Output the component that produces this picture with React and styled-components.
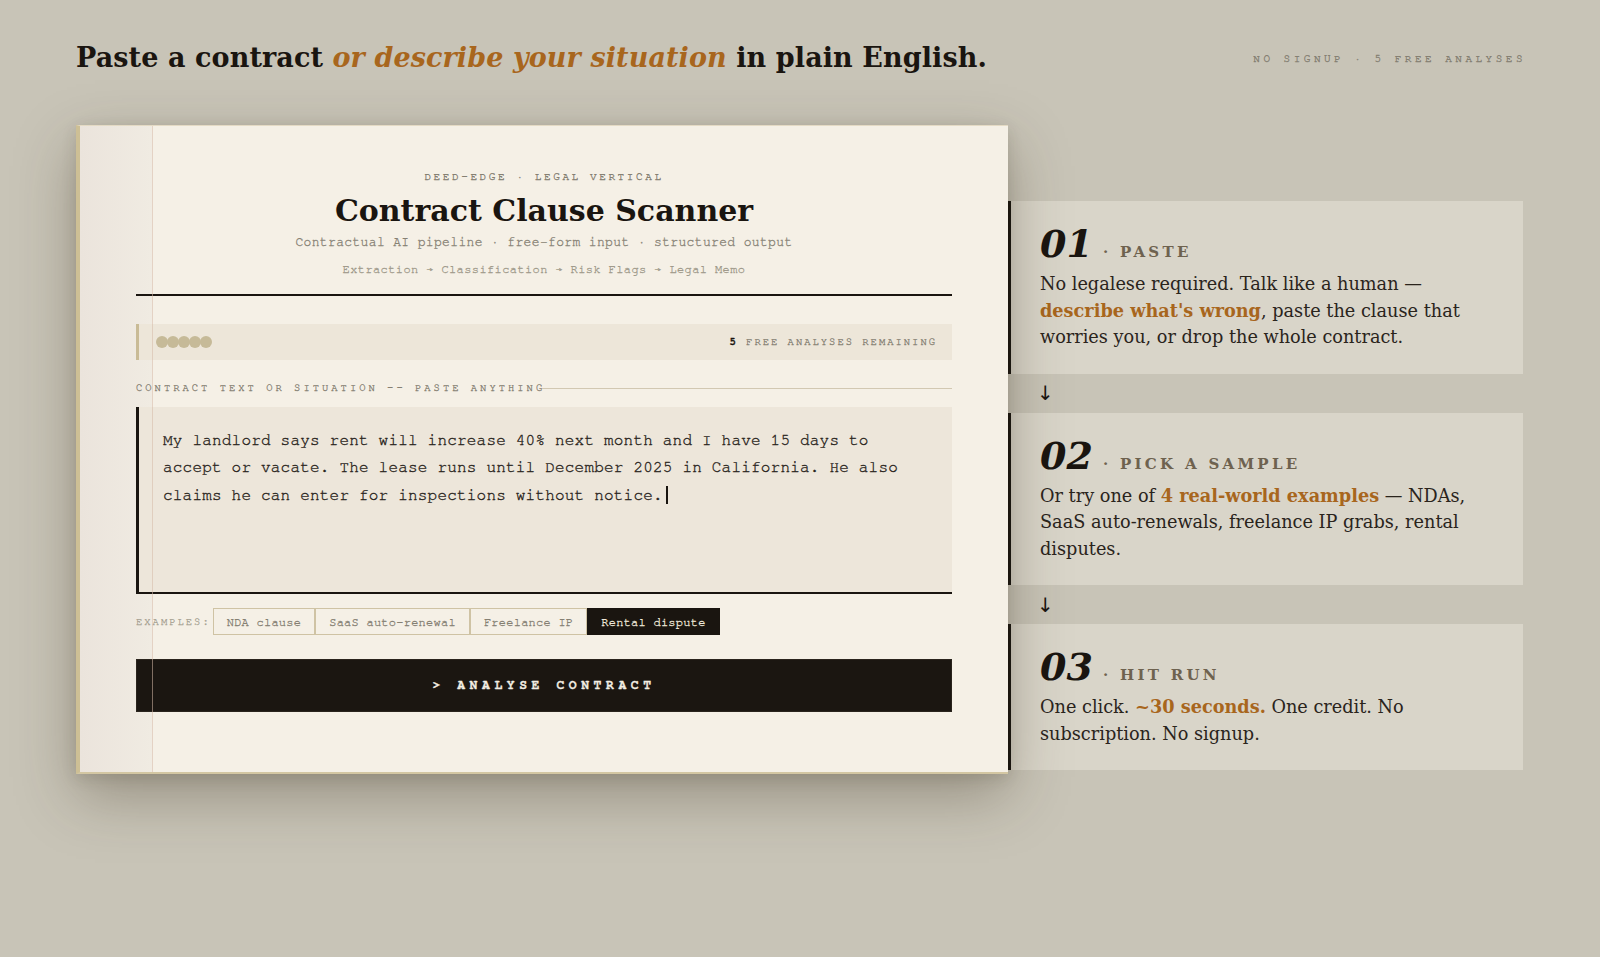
import React from "react";
import styled, { createGlobalStyle, css } from "styled-components";

const Global = createGlobalStyle`
  html, body { margin: 0; padding: 0; }
  body {
    background: #c8c4b7;
    font-family: "DejaVu Serif", serif;
    color: #1a1510;
    -webkit-font-smoothing: antialiased;
  }
  #root { min-height: 957px; }
`;

const MONO = `"Nimbus Mono PS", "FreeMono", "Courier", "Liberation Mono", "Courier New", monospace`;
const SERIF = `"DejaVu Serif", serif`;

const monoText = (stroke = 0.3) => css`
  font-family: ${MONO};
  -webkit-text-stroke: ${stroke}px currentColor;
`;

const Page = styled.div`
  box-sizing: border-box;
  width: 1600px;
  min-height: 957px;
  padding: 41px 77px 0 76px;
`;

const Header = styled.header`
  display: flex;
  justify-content: space-between;
  align-items: center;
  height: 34px;
`;

const Headline = styled.h1`
  margin: 0;
  font-family: ${SERIF};
  font-weight: 700;
  font-size: 27px;
  line-height: 34px;
  color: #1a1510;
  letter-spacing: 0.1px;
`;

const Accent = styled.em`
  color: #a8661d;
  font-style: italic;
`;

const Meta = styled.div`
  ${monoText(0.35)};
  font-size: 11px;
  letter-spacing: 3.5px;
  color: #858073;
  margin-right: -3px;
`;

const Main = styled.main`
  display: grid;
  grid-template-columns: 932px 1fr;
  align-items: start;
  margin-top: 50px;
`;

const Card = styled.section`
  position: relative;
  z-index: 2;
  box-sizing: border-box;
  padding: 43px 56px 60px 56px;
  background: linear-gradient(
    90deg,
    #ebe4dc 0px,
    #f0ebe2 72px,
    #f5f0e6 72px,
    #f5f0e6 100%
  );
  border-left: 4px solid #cdbf95;
  border-top: 1px solid #e4dac4;
  border-bottom: 2px solid #d3c6a2;
  box-shadow: 0 22px 55px rgba(60, 48, 28, 0.34), 0 4px 14px rgba(60, 48, 28, 0.14);

  &::after {
    content: "";
    position: absolute;
    top: 0;
    bottom: 0;
    left: 72px;
    width: 1px;
    background: rgba(214, 186, 168, 0.55);
    pointer-events: none;
  }
`;

const CardHead = styled.div`
  text-align: center;
  padding-bottom: 16px;
  border-bottom: 2px solid #1a1510;
`;

const Eyebrow = styled.div`
  ${monoText(0.35)};
  font-size: 11px;
  line-height: 15px;
  letter-spacing: 2.6px;
  color: #858073;
`;

const Title = styled.h2`
  margin: 8px 0 0;
  font-family: ${SERIF};
  font-weight: 700;
  font-size: 30px;
  line-height: 38px;
  color: #1a1510;
`;

const Sub = styled.div`
  ${monoText(0.3)};
  margin-top: ${(p) => p.$mt}px;
  font-size: ${(p) => p.$size}px;
  line-height: 18px;
  letter-spacing: ${(p) => p.$ls}px;
  color: ${(p) => p.$color};
`;

const Credits = styled.div`
  margin-top: 28px;
  height: 36px;
  box-sizing: border-box;
  display: flex;
  align-items: center;
  justify-content: space-between;
  padding: 0 15px 0 17px;
  background: #ede6d9;
  border-left: 3px solid #c9bb96;
`;

const Dots = styled.div`
  display: flex;
`;

const Dot = styled.span`
  width: 12px;
  height: 12px;
  border-radius: 50%;
  background: #c6ba98;
  margin-right: -1px;
`;

const CreditText = styled.div`
  ${monoText(0.3)};
  font-size: 10.5px;
  letter-spacing: 2px;
  color: #858073;
`;

const CreditCount = styled.b`
  color: #1a1510;
  font-weight: 700;
`;

const FieldLabel = styled.div`
  ${monoText(0.3)};
  margin-top: 21px;
  display: flex;
  align-items: center;
  font-size: 10.5px;
  line-height: 14px;
  letter-spacing: 3px;
  color: #858073;
  white-space: nowrap;

  &::after {
    content: "";
    flex: 1;
    height: 1px;
    background: #d2c8b2;
    margin-left: -3px;
  }
`;

const TextBox = styled.div`
  ${monoText(0.35)};
  margin-top: 12px;
  box-sizing: border-box;
  height: 187px;
  padding: 20px 24px 16px;
  background: #ede6da;
  border-left: 3px solid #1a1510;
  border-bottom: 2px solid #1a1510;
  font-size: 16px;
  line-height: 27.3px;
  letter-spacing: 0.2px;
  color: #2a2520;
`;

const Caret = styled.span`
  display: inline-block;
  width: 2px;
  height: 18px;
  margin-left: 3px;
  vertical-align: -4px;
  background: #1a1510;
`;

const Examples = styled.div`
  margin-top: 14px;
  display: flex;
  align-items: center;
`;

const ExLabel = styled.span`
  ${monoText(0.25)};
  font-size: 10.5px;
  letter-spacing: 2px;
  color: #a39d8e;
  margin-right: 2px;
`;

const Chip = styled.button`
  ${monoText(0.3)};
  height: 27px;
  box-sizing: border-box;
  padding: 0 13px;
  font-size: 12px;
  letter-spacing: 0.25px;
  border: 1px solid ${(p) => (p.$active ? "#1a1510" : "#cfc3a4")};
  background: ${(p) => (p.$active ? "#1a1510" : "#f5f0e6")};
  color: ${(p) => (p.$active ? "#ede6d8" : "#858073")};
  cursor: pointer;
`;

const RunButton = styled.button`
  ${monoText(0.3)};
  margin-top: 24px;
  width: 100%;
  height: 53px;
  border: 1px solid #2a241d;
  background: #1b1611;
  color: #f3eee3;
  font-weight: 700;
  font-size: 13px;
  letter-spacing: 4.6px;
  cursor: pointer;
`;

const Steps = styled.div`
  display: flex;
  flex-direction: column;
  padding-top: 76px;
`;

const StepCard = styled.div`
  box-sizing: border-box;
  padding: 24px 30px 23px 29px;
  background: #d9d5c9;
  border-left: 3px solid #15110d;
`;

const StepHead = styled.div`
  display: flex;
  align-items: baseline;
`;

const StepNum = styled.span`
  font-family: ${SERIF};
  font-weight: 700;
  font-style: italic;
  font-size: 38px;
  line-height: 38px;
  color: #1a1510;
`;

const StepName = styled.span`
  margin-left: 10px;
  font-family: ${SERIF};
  font-weight: 700;
  font-size: 15px;
  letter-spacing: 3.3px;
  color: #6e624f;
`;

const StepText = styled.p`
  margin: 8px 0 0;
  font-family: ${SERIF};
  font-size: 17.7px;
  line-height: 26.5px;
  color: #2a241c;
`;

const Hi = styled.b`
  color: #a8661d;
  font-weight: 700;
`;

const Arrow = styled.div`
  height: 39px;
  display: flex;
  align-items: center;
  padding-left: 29px;
  font-family: "DejaVu Sans", sans-serif;
  font-size: 20px;
  color: #1a1510;
`;

const steps = [
  {
    n: "01",
    name: "· PASTE",
    text: (
      <>
        No legalese required. Talk like a human — <Hi>describe what's wrong</Hi>, paste the
        clause that worries you, or drop the whole contract.
      </>
    ),
  },
  {
    n: "02",
    name: "· PICK A SAMPLE",
    text: (
      <>
        Or try one of <Hi>4 real-world examples</Hi> — NDAs, SaaS auto-renewals, freelance IP
        grabs, rental disputes.
      </>
    ),
  },
  {
    n: "03",
    name: "· HIT RUN",
    text: (
      <>
        One click. <Hi>~30 seconds.</Hi> One credit. No subscription. No signup.
      </>
    ),
  },
];

const examples = ["NDA clause", "SaaS auto-renewal", "Freelance IP", "Rental dispute"];

export default function App() {
  return (
    <>
      <Global />
      <Page>
        <Header>
          <Headline>
            Paste a contract <Accent>or describe your situation</Accent> in plain English.
          </Headline>
          <Meta>NO SIGNUP · 5 FREE ANALYSES</Meta>
        </Header>

        <Main>
          <Card>
            <CardHead>
              <Eyebrow>DEED-EDGE · LEGAL VERTICAL</Eyebrow>
              <Title>Contract Clause Scanner</Title>
              <Sub $mt={4} $size={13} $ls={0.35} $color="#858073">
                Contractual AI pipeline · free-form input · structured output
              </Sub>
              <Sub $mt={8} $size={12} $ls={0.4} $color="#a09a8b">
                Extraction → Classification → Risk Flags → Legal Memo
              </Sub>
            </CardHead>

            <Credits>
              <Dots>
                {[0, 1, 2, 3, 4].map((i) => (
                  <Dot key={i} />
                ))}
              </Dots>
              <CreditText>
                <CreditCount>5</CreditCount> FREE ANALYSES REMAINING
              </CreditText>
            </Credits>

            <FieldLabel>CONTRACT TEXT OR SITUATION -- PASTE ANYTHING</FieldLabel>

            <TextBox>
              My landlord says rent will increase 40% next month and I have 15 days to accept or
              vacate. The lease runs until December 2025 in California. He also claims he can
              enter for inspections without notice.
              <Caret />
            </TextBox>

            <Examples>
              <ExLabel>EXAMPLES:</ExLabel>
              {examples.map((e, i) => (
                <Chip key={e} $active={i === 3}>
                  {e}
                </Chip>
              ))}
            </Examples>

            <RunButton>&gt; ANALYSE CONTRACT</RunButton>
          </Card>

          <Steps>
            {steps.map((s, i) => (
              <React.Fragment key={s.n}>
                {i > 0 && <Arrow>↓</Arrow>}
                <StepCard>
                  <StepHead>
                    <StepNum>{s.n}</StepNum>
                    <StepName>{s.name}</StepName>
                  </StepHead>
                  <StepText>{s.text}</StepText>
                </StepCard>
              </React.Fragment>
            ))}
          </Steps>
        </Main>
      </Page>
    </>
  );
}
